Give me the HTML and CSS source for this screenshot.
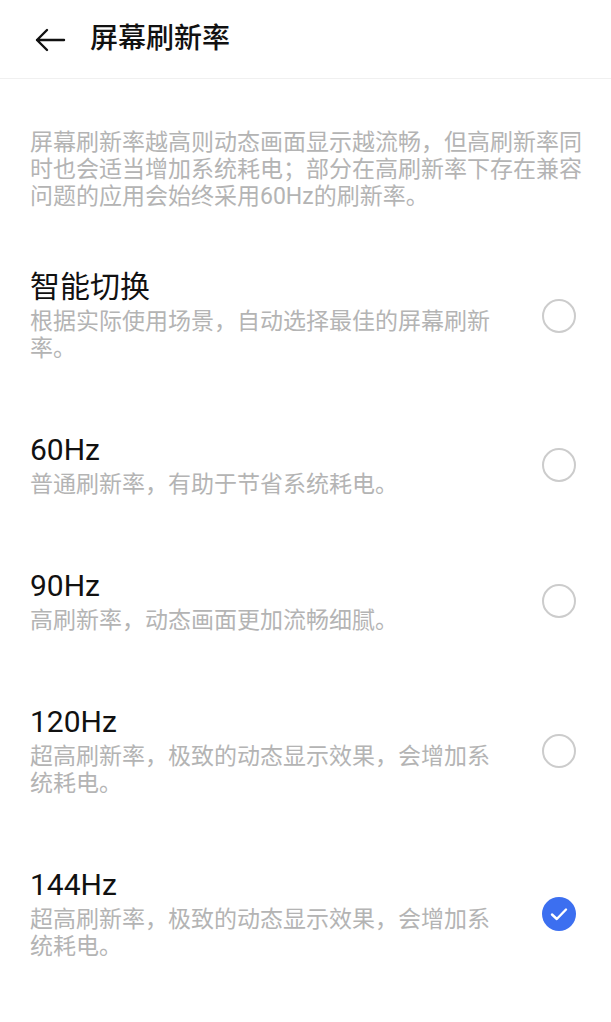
FILE: index.html
```html
<!DOCTYPE html>
<html lang="zh-CN">
<head>
    <meta charset="UTF-8">
    <meta name="viewport" content="width=device-width, initial-scale=1.0">
    <title>屏幕刷新率</title>
    <link rel="stylesheet" href="styles.css">
</head>
<body>

    <header class="topbar">
        <svg class="back" width="32" height="24" viewBox="0 0 32 24">
            <path d="M30 12 H3 M13 2 L3 12 L13 22" fill="none" stroke="#111" stroke-width="2.4" stroke-linecap="round" stroke-linejoin="round"/>
        </svg>
        <h1>屏幕刷新率</h1>
    </header>

    <p class="intro">屏幕刷新率越高则动态画面显示越流畅，但高刷新率同时也会适当增加系统耗电；部分在高刷新率下存在兼容问题的应用会始终采用60Hz的刷新率。</p>

    <ul class="options">
        <li class="option">
            <div class="text">
                <div class="name">智能切换</div>
                <div class="desc">根据实际使用场景，自动选择最佳的屏幕刷新率。</div>
            </div>
            <span class="radio"></span>
        </li>
        <li class="option">
            <div class="text">
                <div class="name">60Hz</div>
                <div class="desc">普通刷新率，有助于节省系统耗电。</div>
            </div>
            <span class="radio"></span>
        </li>
        <li class="option">
            <div class="text">
                <div class="name">90Hz</div>
                <div class="desc">高刷新率，动态画面更加流畅细腻。</div>
            </div>
            <span class="radio"></span>
        </li>
        <li class="option">
            <div class="text">
                <div class="name">120Hz</div>
                <div class="desc">超高刷新率，极致的动态显示效果，会增加系统耗电。</div>
            </div>
            <span class="radio"></span>
        </li>
        <li class="option">
            <div class="text">
                <div class="name">144Hz</div>
                <div class="desc">超高刷新率，极致的动态显示效果，会增加系统耗电。</div>
            </div>
            <span class="radio checked">
                <svg width="18" height="14" viewBox="0 0 18 14">
                    <path d="M2 7.5 L6.8 12 L16 2.5" fill="none" stroke="#fff" stroke-width="2.4" stroke-linecap="round" stroke-linejoin="round"/>
                </svg>
            </span>
        </li>
    </ul>

</body>
</html>
```

FILE: styles.css
```css
body {
    font-family: Roboto, 'Noto Sans CJK SC', sans-serif;
    margin: 0;
    padding: 0;
    background: #fff;
    color: #111;
}

.topbar {
    height: 78px;
    display: flex;
    align-items: center;
    padding-left: 34px;
    border-bottom: 1px solid #f0f0f0;
}

.topbar .back {
    margin-top: 2px;
}

.topbar h1 {
    font-size: 28px;
    font-weight: 500;
    margin: 0 0 0 24px;
    line-height: 36px;
}

.intro {
    font-size: 23px;
    line-height: 27px;
    color: #b4b4b4;
    margin: 0;
    padding: 50px 26px 0 30px;
}

.options {
    list-style: none;
    margin: 0;
    padding: 0;
    margin-top: 23px;
}

.option {
    display: flex;
    align-items: center;
    padding: 36px 35px 34px 30px;
}

.text {
    width: 472px;
}

.name {
    font-size: 30px;
    line-height: 36px;
    color: #111;
}

.desc {
    font-size: 23px;
    line-height: 27px;
    color: #b4b4b4;
    margin-top: 3px;
}

.radio {
    margin-left: auto;
    width: 30px;
    height: 30px;
    border: 2px solid #cccccc;
    border-radius: 50%;
    display: flex;
    align-items: center;
    justify-content: center;
}

.radio.checked {
    width: 34px;
    height: 34px;
    border: none;
    background: #3c6ff0;
}
```
